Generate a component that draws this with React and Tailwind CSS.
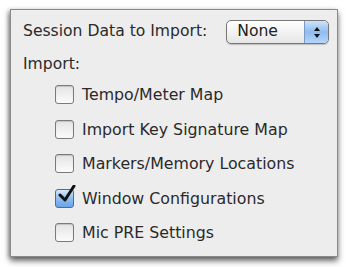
const ITEMS = [
  { label: "Tempo/Meter Map", checked: false },
  { label: "Import Key Signature Map", checked: false },
  { label: "Markers/Memory Locations", checked: false },
  { label: "Window Configurations", checked: true },
  { label: "Mic PRE Settings", checked: false }
];

function Checkbox({ checked }) {
  if (checked) {
    return (
      <span className="relative flex h-[19px] w-[19px] shrink-0 items-center justify-center rounded-[3px] border border-[#4a6c9a] bg-gradient-to-b from-[#d6e8fb] via-[#8fbdf0] to-[#6aa3e8]">
        <svg viewBox="0 0 20 20" className="absolute -top-[5px] left-[1px] h-[20px] w-[20px]">
          <path d="M3 10 L8 15 L17 1" fill="none" stroke="#111" strokeWidth="3" strokeLinecap="round" strokeLinejoin="round" />
        </svg>
      </span>
    );
  }
  return (
    <span className="h-[19px] w-[19px] shrink-0 rounded-[3px] border border-[#7a7a7a] bg-gradient-to-b from-[#e4e4e4] to-[#fbfbfb] shadow-[inset_0_1px_1px_rgba(0,0,0,0.15)]" />
  );
}

function App() {
  return (
    <div className="h-[267px] w-[349px] bg-white pl-[10px] pt-[9px]" style={{ fontFamily: '"DejaVu Sans", sans-serif' }}>
      <div className="h-[248px] w-[328px] border border-[#8a8a8a] bg-[#eeedee] shadow-[0_4px_6px_rgba(0,0,0,0.55),-2px_1px_4px_rgba(0,0,0,0.25)]">
        <div className="flex items-center pl-[12px] pt-[10px]">
          <span className="text-[15.6px] text-[#2a2a2a]">Session Data to Import:</span>
          <div className="ml-[19px] flex h-[24px] w-[103px] items-center overflow-hidden rounded-[5px] border border-[#777] bg-gradient-to-b from-white to-[#e6e6e6] shadow-[0_1px_1px_rgba(0,0,0,0.2)]">
            <span className="flex-1 pl-[10px] text-[15.6px] text-[#222]">None</span>
            <span className="flex h-full w-[24px] flex-col items-center justify-center gap-[3px] rounded-r-[4px] border-l border-[#7c9cc8] bg-gradient-to-b from-[#cfe3f9] via-[#8dbcf0] to-[#b5d6f7]">
              <span className="h-0 w-0 border-x-[3px] border-b-[4px] border-x-transparent border-b-[#111]" />
              <span className="h-0 w-0 border-x-[3px] border-t-[4px] border-x-transparent border-t-[#111]" />
            </span>
          </div>
        </div>
        <div className="mt-[9px] pl-[12px] text-[15.6px] text-[#2a2a2a]">Import:</div>
        <div className="mt-[9px] flex flex-col gap-[15.5px] pl-[44px]">
          {ITEMS.map((item) => (
            <div key={item.label} className="flex h-[19px] items-center gap-[8px]">
              <Checkbox checked={item.checked} />
              <span className="text-[15.8px] text-[#2a2a2a]">{item.label}</span>
            </div>
          ))}
        </div>
      </div>
    </div>
  );
}

export default App;
